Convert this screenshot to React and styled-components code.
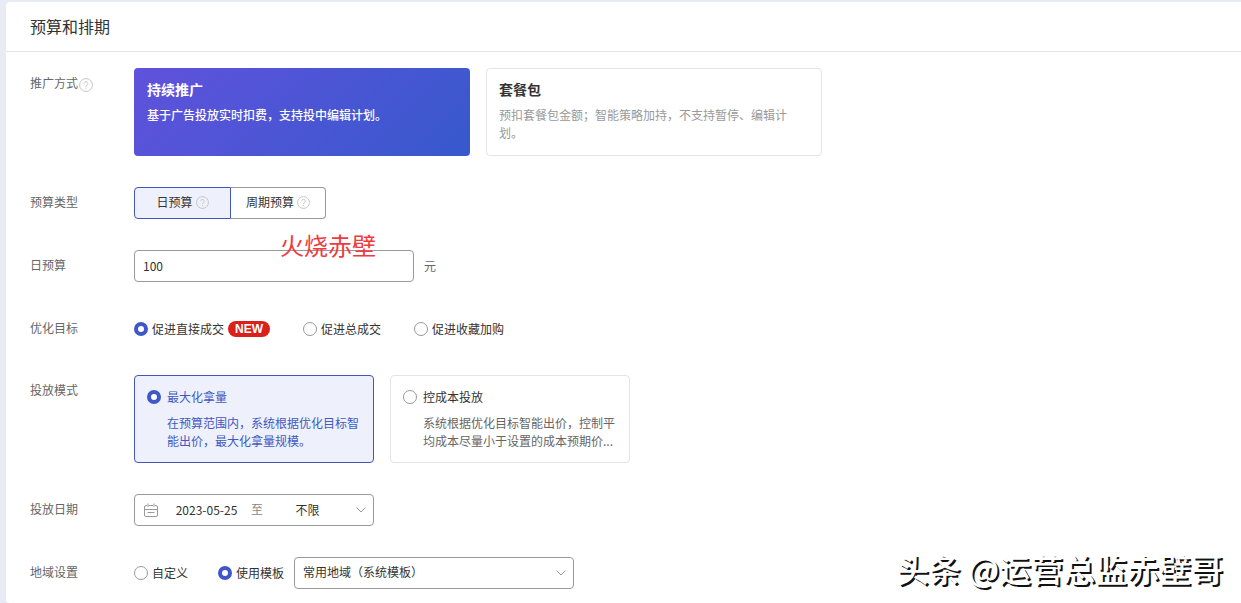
import React, { useState } from 'react';
import styled, { createGlobalStyle, css } from 'styled-components';

const GlobalStyle = createGlobalStyle`
  * {
    box-sizing: border-box;
  }
  body {
    margin: 0;
    background: #e8ebf3;
    font-family: "Noto Sans CJK SC", sans-serif;
    font-size: 12px;
    line-height: 18px;
    color: #333;
  }
  button, input, select {
    font: inherit;
    color: inherit;
  }
`;

const Page = styled.div`
  position: relative;
  padding: 2px 0 0 6px;
`;

const Panel = styled.section`
  background: #fff;
  border-radius: 4px 0 0 4px;
`;

const PanelTitle = styled.h2`
  margin: 0;
  padding: 12px 24px 13px;
  border-bottom: 1px solid #e3e4e8;
  font-size: 16px;
  font-weight: 400;
  line-height: 24px;
`;

const Form = styled.form`
  display: flex;
  flex-direction: column;
  gap: 31px;
  padding: 16px 24px 14px;
`;

const Row = styled.div`
  display: flex;
  align-items: flex-start;
`;

const RowLabel = styled.label`
  display: flex;
  align-items: center;
  gap: 1px;
  flex: 0 0 104px;
  line-height: 30px;
  color: #666;

  svg {
    margin-top: 4px;
  }
`;

const Controls = styled.div`
  display: flex;
  align-items: center;
  gap: ${props => props.$gap || 0}px;
  min-height: 31px;
`;

const Cards = styled.div`
  display: flex;
  flex-wrap: wrap;
  gap: 16px;
`;

const PlanCard = styled.button`
  display: flex;
  flex-direction: column;
  width: 336px;
  min-height: 88px;
  padding: 11px 12px;
  border: 1px solid #e3e4e8;
  border-radius: 4px;
  background: #fff;
  color: #999;
  text-align: left;
  cursor: pointer;

  ${props => props.$active && css`
    padding: 12px 13px;
    border: none;
    background: linear-gradient(135deg, #6052dc 0%, #3759cd 100%);
    color: #fff;
    font-weight: 500;
  `}
`;

const PlanTitle = styled.strong`
  margin-bottom: 8px;
  font-size: 14px;
  font-weight: 700;
  color: ${props => (props.$active ? '#fff' : '#333')};
`;

const Segment = styled.button`
  display: flex;
  align-items: center;
  justify-content: center;
  gap: 3px;
  width: 95px;
  height: 32px;
  padding: 0 0 2px;
  border: 1px solid #999;
  border-left: none;
  border-radius: 0 4px 4px 0;
  background: #fff;
  cursor: pointer;

  ${props => props.$active && css`
    width: 97px;
    border: 1px solid #4256b8;
    border-radius: 4px 0 0 4px;
    background: #eef1fb;
  `}
`;

const BudgetField = styled.div`
  position: relative;
`;

const BudgetInput = styled.input`
  display: block;
  width: 280px;
  height: 32px;
  padding: 0 8px 2px;
  border: 1px solid #999;
  border-radius: 4px;
  background: #fff;
  outline: none;
`;

const RedNote = styled.span`
  position: absolute;
  left: 146px;
  top: -21px;
  font-size: 24px;
  line-height: 32px;
  white-space: nowrap;
  color: #f03a3e;
  pointer-events: none;
`;

const Unit = styled.span`
  color: #666;
`;

const RadioLabel = styled.label`
  display: flex;
  align-items: center;
  gap: 4px;
  white-space: nowrap;
  cursor: pointer;
`;

const Radio = styled.input`
  appearance: none;
  flex: none;
  width: 14px;
  height: 14px;
  margin: 0;
  border: 1px solid #999;
  border-radius: 50%;
  background: #fff;

  &:checked {
    border: 4px solid #3f57c8;
  }
`;

const NewTag = styled.span`
  padding: 0 7px;
  border-radius: 8px;
  background: #d9201a;
  color: #fff;
  font-family: "Liberation Sans", Arial, sans-serif;
  font-weight: 700;
  line-height: 16px;
`;

const ModeCard = styled.label`
  display: grid;
  grid-template-columns: 14px 1fr;
  gap: 8px 6px;
  align-items: center;
  align-content: start;
  width: 240px;
  min-height: 88px;
  padding: 12px;
  border: 1px solid ${props => (props.$active ? '#4256b8' : '#e3e4e8')};
  border-radius: 4px;
  background: ${props => (props.$active ? '#eef1fb' : '#fff')};
  color: ${props => (props.$active ? '#4158c4' : '#333')};
  cursor: pointer;
`;

const ModeText = styled.span`
  grid-column: 2;
  color: ${props => (props.$active ? '#4158c4' : '#666')};
`;

const DateRange = styled.div`
  display: flex;
  align-items: center;
  width: 240px;
  height: 32px;
  padding: 0 7px 0 9px;
  border: 1px solid #999;
  border-radius: 4px;

  svg:first-child {
    margin-right: 4px;
  }
  svg:last-child {
    margin-left: 4px;
  }
`;

const DateInput = styled.input`
  flex: 1 1 0;
  min-width: 0;
  height: 24px;
  padding: 0 0 2px;
  border: none;
  background: none;
  text-align: center;
  outline: none;
`;

const DateSeparator = styled.span`
  padding-bottom: 2px;
  color: #888;
`;

const SelectBox = styled.div`
  display: grid;
  align-items: center;

  > * {
    grid-area: 1 / 1;
  }
  svg {
    justify-self: end;
    margin-right: 8px;
    pointer-events: none;
  }
`;

const Select = styled.select`
  appearance: none;
  width: 280px;
  height: 32px;
  padding: 0 24px 2px 8px;
  border: 1px solid #999;
  border-radius: 4px;
  background: #fff;
  outline: none;
`;

const Watermark = styled.div`
  position: absolute;
  right: 18px;
  bottom: 15px;
  font-size: 32px;
  font-weight: 500;
  line-height: 40px;
  white-space: nowrap;
  color: #fff;
  text-shadow: 2px 2px 0 #111;
  pointer-events: none;
`;

const HelpIcon = ({ size = 13 }) => (
  <svg width={size} height={size} viewBox="0 0 14 14" fill="none" stroke="#c4c4c4" aria-hidden="true">
    <circle cx="7" cy="7" r="6.4" />
    <path d="M5.1 5.6a1.9 1.9 0 1 1 2.9 1.6c-.7.4-1 .7-1 1.4" />
    <path d="M7 9.6v1.1" />
  </svg>
);

const CalendarIcon = () => (
  <svg width="14" height="14" viewBox="0 0 14 14" fill="none" stroke="#999" aria-hidden="true">
    <path d="M3 2.5H2A1.5 1.5 0 0 0 .5 4v8A1.5 1.5 0 0 0 2 13.5h10a1.5 1.5 0 0 0 1.5-1.5V4A1.5 1.5 0 0 0 12 2.5h-1M5 2.5h4" />
    <path d="M4 .5v3.500M10 .5v3.500M.5 6.500h13M3.500 9.500h7" />
  </svg>
);

const ChevronIcon = () => (
  <svg width="10" height="6" viewBox="0 0 10 6" fill="none" stroke="#999" aria-hidden="true">
    <path d="M.5.5L5 5 9.500.5" />
  </svg>
);

const plans = [
  { id: 'continuous', title: '持续推广', text: '基于广告投放实时扣费，支持投中编辑计划。' },
  { id: 'package', title: '套餐包', text: '预扣套餐包金额；智能策略加持，不支持暂停、编辑计划。' },
];

const budgetTypes = [
  { id: 'daily', label: '日预算' },
  { id: 'period', label: '周期预算' },
];

const goals = [
  { id: 'direct', label: '促进直接成交', isNew: true },
  { id: 'total', label: '促进总成交' },
  { id: 'collect', label: '促进收藏加购' },
];

const modes = [
  { id: 'max', label: '最大化拿量', text: '在预算范围内，系统根据优化目标智能出价，最大化拿量规模。' },
  { id: 'cost', label: '控成本投放', text: '系统根据优化目标智能出价，控制平均成本尽量小于设置的成本预期价...' },
];

const App = () => {
  const [plan, setPlan] = useState('continuous');
  const [budgetType, setBudgetType] = useState('daily');
  const [goal, setGoal] = useState('direct');
  const [mode, setMode] = useState('max');
  const [region, setRegion] = useState('template');

  return (
    <Page lang="zh-CN">
      <GlobalStyle />
      <Panel>
        <PanelTitle>预算和排期</PanelTitle>
        <Form>
          <Row>
            <RowLabel as="span">推广方式<HelpIcon size={14} /></RowLabel>
            <Cards>
              {plans.map(item => (
                <PlanCard key={item.id} type="button" $active={plan === item.id} onClick={() => setPlan(item.id)}>
                  <PlanTitle $active={plan === item.id}>{item.title}</PlanTitle>
                  <span>{item.text}</span>
                </PlanCard>
              ))}
            </Cards>
          </Row>

          <Row>
            <RowLabel as="span">预算类型</RowLabel>
            <Controls>
              {budgetTypes.map(item => (
                <Segment key={item.id} type="button" $active={budgetType === item.id} onClick={() => setBudgetType(item.id)}>
                  {item.label}<HelpIcon />
                </Segment>
              ))}
            </Controls>
          </Row>

          <Row>
            <RowLabel htmlFor="budget">日预算</RowLabel>
            <Controls $gap={10}>
              <BudgetField>
                <BudgetInput id="budget" type="text" defaultValue="100" />
                <RedNote>火烧赤壁</RedNote>
              </BudgetField>
              <Unit>元</Unit>
            </Controls>
          </Row>

          <Row>
            <RowLabel as="span">优化目标</RowLabel>
            <Controls $gap={33}>
              {goals.map(item => (
                <RadioLabel key={item.id}>
                  <Radio type="radio" name="goal" checked={goal === item.id} onChange={() => setGoal(item.id)} />
                  {item.label}
                  {item.isNew && <NewTag>NEW</NewTag>}
                </RadioLabel>
              ))}
            </Controls>
          </Row>

          <Row>
            <RowLabel as="span">投放模式</RowLabel>
            <Cards>
              {modes.map(item => (
                <ModeCard key={item.id} $active={mode === item.id}>
                  <Radio type="radio" name="mode" checked={mode === item.id} onChange={() => setMode(item.id)} />
                  <span>{item.label}</span>
                  <ModeText $active={mode === item.id}>{item.text}</ModeText>
                </ModeCard>
              ))}
            </Cards>
          </Row>

          <Row>
            <RowLabel htmlFor="start-date">投放日期</RowLabel>
            <DateRange>
              <CalendarIcon />
              <DateInput id="start-date" type="text" defaultValue="2023-05-25" />
              <DateSeparator>至</DateSeparator>
              <DateInput type="text" aria-label="结束日期" defaultValue="不限" />
              <ChevronIcon />
            </DateRange>
          </Row>

          <Row>
            <RowLabel as="span">地域设置</RowLabel>
            <Controls $gap={30}>
              <RadioLabel>
                <Radio type="radio" name="region" checked={region === 'custom'} onChange={() => setRegion('custom')} />
                自定义
              </RadioLabel>
              <Controls $gap={10}>
                <RadioLabel>
                  <Radio type="radio" name="region" checked={region === 'template'} onChange={() => setRegion('template')} />
                  使用模板
                </RadioLabel>
                <SelectBox>
                  <Select aria-label="地域模板" defaultValue="common">
                    <option value="common">常用地域（系统模板）</option>
                  </Select>
                  <ChevronIcon />
                </SelectBox>
              </Controls>
            </Controls>
          </Row>
        </Form>
      </Panel>
      <Watermark>头条 @运营总监赤壁哥</Watermark>
    </Page>
  );
};

export default App;
